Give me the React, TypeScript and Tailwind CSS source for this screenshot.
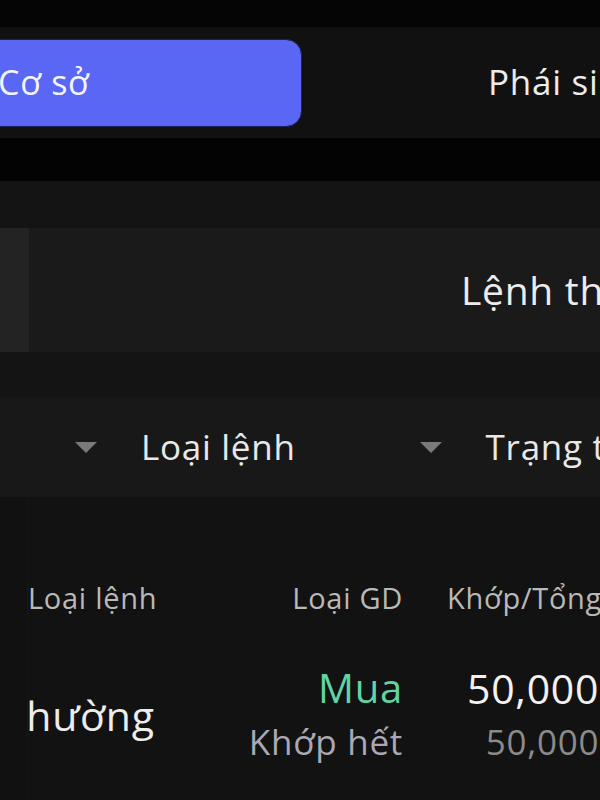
import React from "react";

const font = { fontFamily: "'Open Sans', 'Noto Sans', sans-serif" };

function Caret() {
  return (
    <svg width="22" height="11" viewBox="0 0 22 11" className="shrink-0">
      <polygon points="0,0 22,0 11,11" fill="#7a7a7a" />
    </svg>
  );
}

export default function App() {
  return (
    <div
      className="w-[600px] h-[800px] overflow-hidden bg-[#050505] flex flex-col tracking-[0.045em]"
      style={font}
    >
      <div className="h-[27px] shrink-0" />
      <div className="h-[111px] shrink-0 bg-[#111111] flex items-center whitespace-nowrap">
        <div className="ml-[-40px] w-[342px] h-[88px] shrink-0 rounded-[16px] bg-[#5a66f4] border border-[#1c2160] flex items-center pl-[37px] text-[34px] text-[#f4f4ff]">
          Cơ sở
        </div>
        <div className="ml-[186px] text-[35px] text-[#ececec] shrink-0">
          Phái sinh
        </div>
      </div>
      <div className="h-[43px] shrink-0 bg-[#030303]" />
      <div className="h-[47px] shrink-0 bg-[#141414]" />
      <div className="h-[124px] shrink-0 bg-[#1a1a1a] flex whitespace-nowrap">
        <div className="w-[29px] shrink-0 bg-[#232323]" />
        <div className="flex items-center pl-[432px] text-[39px] font-medium text-[#ececec] shrink-0">
          Lệnh thường
        </div>
      </div>
      <div className="h-[45px] shrink-0 bg-[#141414]" />
      <div className="h-[100px] shrink-0 bg-[#181818] flex items-center whitespace-nowrap text-[35px] font-medium text-[#e8e8e8]">
        <div className="ml-[75px] flex items-center gap-[44px] shrink-0">
          <Caret />
          <span>Loại lệnh</span>
        </div>
        <div className="ml-[124px] flex items-center gap-[44px] shrink-0">
          <Caret />
          <span>Trạng thái</span>
        </div>
      </div>
      <div className="flex-1 bg-[#121212] flex whitespace-nowrap">
        <div className="w-[28px] shrink-0 bg-[#111111] border-r border-[#161616]" />
        <div className="flex flex-col shrink-0">
          <div className="h-[42px] shrink-0" />
          <div className="h-[118px] shrink-0 flex items-center text-[29px] text-[#b9b9b9]">
            <div className="w-[375px] shrink-0 flex">
              <span>Loại lệnh</span>
              <span className="ml-auto">Loại GD</span>
            </div>
            <span className="ml-[44px]">Khớp/Tổng</span>
          </div>
          <div className="h-[120px] shrink-0 flex items-center mt-[-2px]">
            <div className="w-[130px] shrink-0 overflow-hidden text-[41px] text-[#ededed] pt-[2px]">
              <span className="ml-[-25px]">Thường</span>
            </div>
            <div className="w-[245px] shrink-0 flex flex-col items-end">
              <span className="text-[40px] leading-[54px] text-[#62d3a2]">Mua</span>
              <span className="text-[35px] leading-[54px] text-[#aaa8b5]">Khớp hết</span>
            </div>
            <div className="ml-[64px] flex flex-col items-end">
              <span className="text-[41px] leading-[54px] text-[#f2f2f2]">50,000</span>
              <span className="text-[35px] leading-[54px] text-[#8a8a8a]">50,000</span>
            </div>
          </div>
        </div>
      </div>
    </div>
  );
}
